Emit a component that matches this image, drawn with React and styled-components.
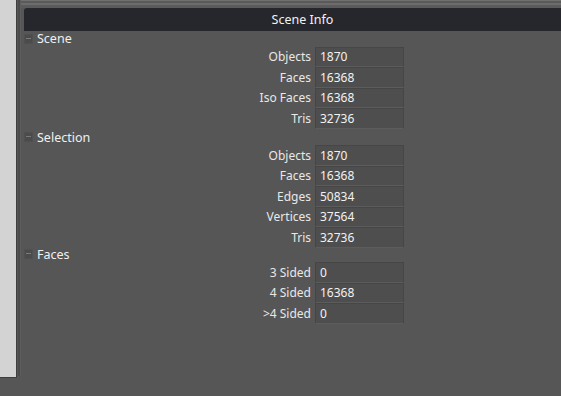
import styled, {createGlobalStyle} from "styled-components";

const GlobalStyle = createGlobalStyle`
    html, body {
        margin: 0;
        padding: 0;
        background: #565656;
    }
    body {
        font-family: "Noto Sans", "Liberation Sans", sans-serif;
        -webkit-font-smoothing: antialiased;
    }
`;

const Screen = styled.div`
    display: flex;
    width: 561px;
    height: 396px;
    overflow: hidden;
    background: #565656;
`;

const SideStrip = styled.div`
    width: 16px;
    height: 377px;
    flex: none;
    background: #d3d3d3;
    border-right: 1px solid #3e3e3e;
    border-bottom: 1px solid #3e3e3e;
    box-sizing: content-box;
`;

const Splitter = styled.div`
    width: 4px;
    flex: none;
    display: flex;
    justify-content: center;

    &::before {
        content: "";
        width: 2px;
        height: 376px;
        background: #4b4b4b;
        border-right: 1px solid #5d5d5d;
    }
`;

const Main = styled.div`
    flex: 1;
    display: flex;
    flex-direction: column;
    min-width: 0;
`;

const TopEdge = styled.div`
    height: 8px;
    flex: none;
    background: linear-gradient(
        to bottom,
        #707070 0px,
        #707070 1px,
        #5a5a5a 1px,
        #5a5a5a 3px,
        #6c6c6c 3px,
        #6c6c6c 5px,
        #5b5b5b 5px
    );
`;

const TitleBar = styled.div`
    height: 23px;
    margin-left: 3px;
    margin-right: -20px;
    flex: none;
    display: flex;
    align-items: center;
    justify-content: center;
    background: #25272c;
    border-radius: 3px 0 0 0;
    color: #f2f2f2;
    font-size: 12.5px;
`;

const Section = styled.div`
    display: flex;
    flex-direction: column;
    margin-top: ${(p) => p.$offset || 0}px;
`;

const SectionHeader = styled.div`
    height: 15.5px;
    display: flex;
    align-items: center;
    gap: 4px;
    padding-left: 3px;
    color: #f0f0f0;
    font-size: 12.5px;
`;

const Toggle = styled.span`
    width: 7px;
    height: 8px;
    flex: none;
    position: relative;
    background: #4b4b4b;
    border: 1px solid #505050;

    &::after {
        content: "";
        position: absolute;
        left: 1px;
        right: 1px;
        top: 3px;
        height: 1px;
        background: #7a7a7a;
    }
`;

const Row = styled.div`
    height: 20.5px;
    display: grid;
    grid-template-columns: 290px 89px;
    column-gap: 4px;
    align-items: stretch;
`;

const Label = styled.div`
    display: flex;
    align-items: center;
    justify-content: flex-end;
    color: #e8e8e8;
    font-size: 12px;
`;

const Value = styled.div`
    display: flex;
    align-items: center;
    padding-left: 4px;
    background: #4e4e4e;
    border: 1px solid #464646;
    border-bottom-color: #5c5c5c;
    color: #f2f2f2;
    font-size: 12px;
`;

const sections = [
    {
        title: "Scene",
        rows: [
            ["Objects", "1870"],
            ["Faces", "16368"],
            ["Iso Faces", "16368"],
            ["Tris", "32736"],
        ],
    },
    {
        title: "Selection",
        offset: 1,
        rows: [
            ["Objects", "1870"],
            ["Faces", "16368"],
            ["Edges", "50834"],
            ["Vertices", "37564"],
            ["Tris", "32736"],
        ],
    },
    {
        title: "Faces",
        offset: -1,
        rows: [
            ["3 Sided", "0"],
            ["4 Sided", "16368"],
            [">4 Sided", "0"],
        ],
    },
];

export default function App() {
    return (
        <>
            <GlobalStyle/>
            <Screen>
                <SideStrip/>
                <Splitter/>
                <Main>
                    <TopEdge/>
                    <TitleBar>Scene Info</TitleBar>
                    {sections.map((section) => (
                        <Section key={section.title} $offset={section.offset}>
                            <SectionHeader>
                                <Toggle/>
                                {section.title}
                            </SectionHeader>
                            {section.rows.map(([label, value]) => (
                                <Row key={label}>
                                    <Label>{label}</Label>
                                    <Value>{value}</Value>
                                </Row>
                            ))}
                        </Section>
                    ))}
                </Main>
            </Screen>
        </>
    );
}
